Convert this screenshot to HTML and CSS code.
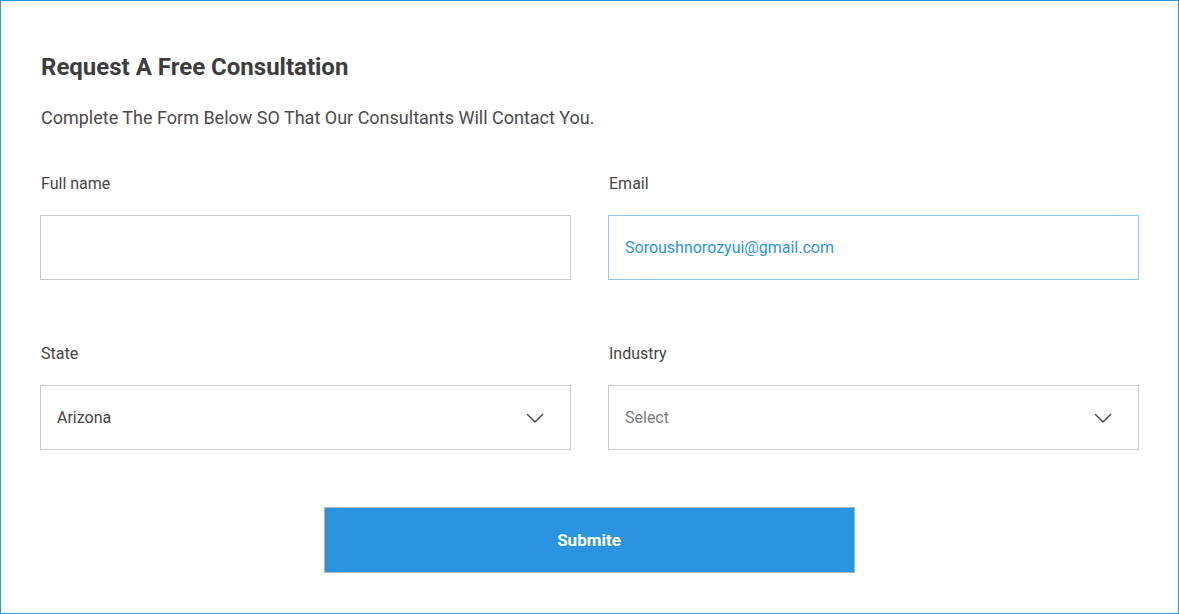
FILE: index.html
```html
<!DOCTYPE html>
<html>
<head>
<meta charset="utf-8">
<link rel="stylesheet" href="styles.css">
</head>
<body>
<div class="card">
  <h1 class="title">Request A Free Consultation</h1>
  <p class="subtitle">Complete The Form Below SO That Our Consultants Will Contact You.</p>
  <div class="grid">
    <div class="field">
      <div class="label">Full name</div>
      <div class="box"></div>
    </div>
    <div class="field">
      <div class="label">Email</div>
      <div class="box box-active"><span class="value-blue">Soroushnorozyui@gmail.com</span></div>
    </div>
    <div class="field">
      <div class="label">State</div>
      <div class="box box-select"><span class="value">Arizona</span>
        <svg class="chev" width="18" height="10" viewBox="0 0 18 10"><polyline points="1,1 9,9 17,1" fill="none" stroke="#444" stroke-width="1.4"/></svg>
      </div>
    </div>
    <div class="field">
      <div class="label">Industry</div>
      <div class="box box-select"><span class="placeholder">Select</span>
        <svg class="chev" width="18" height="10" viewBox="0 0 18 10"><polyline points="1,1 9,9 17,1" fill="none" stroke="#444" stroke-width="1.4"/></svg>
      </div>
    </div>
  </div>
  <div class="actions">
    <button class="submit">Submite</button>
  </div>
</div>
</body>
</html>
```
FILE: styles.css
```css
html, body {
  margin: 0;
  padding: 0;
  background: #fff;
}
body {
  font-family: Roboto, "Liberation Sans", sans-serif;
  color: #444;
}
.card {
  box-sizing: border-box;
  width: 1179px;
  height: 614px;
  border: 1px solid #2a94e0;
  padding: 51px 39px 40px 39px;
}
.title {
  margin: 0 0 0 1px;
  font-size: 24px;
  line-height: 30px;
  font-weight: 700;
  color: #3d3d3d;
}
.subtitle {
  margin: 24px 0 0 1px;
  font-size: 18px;
  line-height: 24px;
  color: #4a4a4a;
}
.grid {
  margin-top: 44px;
  display: grid;
  grid-template-columns: 531px 531px;
  column-gap: 37px;
  row-gap: 64px;
}
.label {
  margin-left: 1px;
  font-size: 16px;
  line-height: 20px;
  color: #444;
}
.box {
  box-sizing: border-box;
  margin-top: 21px;
  height: 65px;
  border: 1px solid #c8c8c8;
  display: flex;
  align-items: center;
  padding: 0 26px 0 16px;
  font-size: 16px;
}
.box-active {
  border-color: #8cc6f0;
}
.box-select {
  justify-content: space-between;
}
.value-blue { color: #2a94e0; }
.value { color: #444; }
.placeholder { color: #7a7a7a; }
.chev { display: block; }
.actions {
  margin-top: 57px;
  display: flex;
  justify-content: center;
}
.submit {
  box-sizing: border-box;
  width: 531px;
  height: 66px;
  margin-right: 1px;
  background: #2a94e0;
  border: 1px solid #b5b5b5;
  color: #fff;
  font-family: inherit;
  font-size: 17px;
  font-weight: 700;
}
```
